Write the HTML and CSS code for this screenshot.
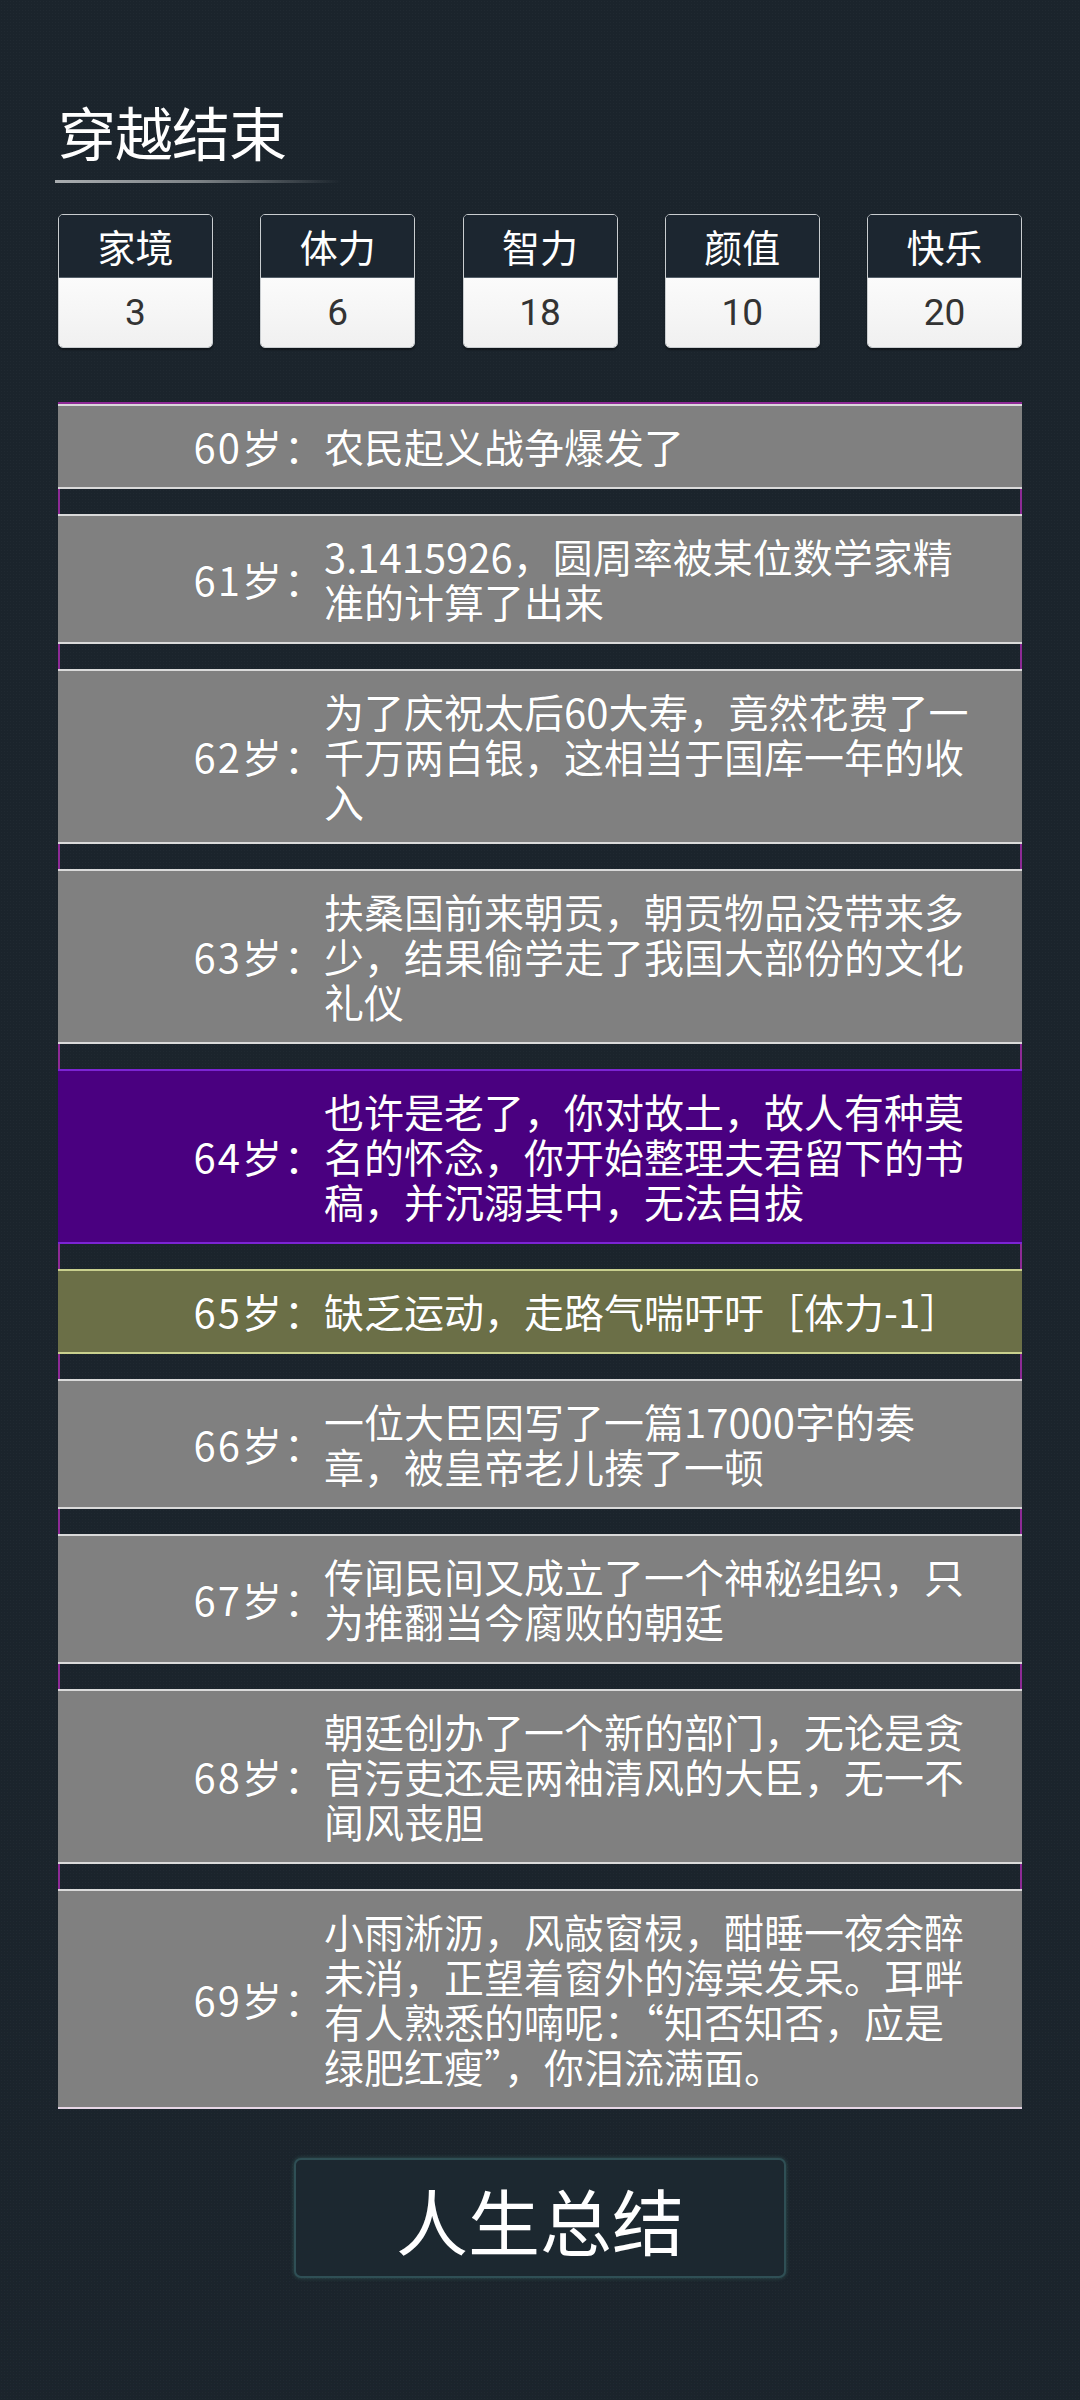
FILE: index.html
```html
<!DOCTYPE html>
<html lang="zh-CN">
<head>
    <meta charset="UTF-8">
    <meta name="viewport" content="width=device-width, initial-scale=1.0">
    <title>穿越结束</title>
    <link rel="stylesheet" href="styles.css">
</head>
<body>
    <div class="page">
        <h1 class="title">穿越结束</h1>
        <div class="title-line"></div>

        <div class="stats">
            <div class="stat"><div class="stat-name">家境</div><div class="stat-value">3</div></div>
            <div class="stat"><div class="stat-name">体力</div><div class="stat-value">6</div></div>
            <div class="stat"><div class="stat-name">智力</div><div class="stat-value">18</div></div>
            <div class="stat"><div class="stat-name">颜值</div><div class="stat-value">10</div></div>
            <div class="stat"><div class="stat-name">快乐</div><div class="stat-value">20</div></div>
        </div>

        <ul class="events">
            <li class="event"><span class="age">60岁：</span><span class="desc">农民起义战争爆发了</span></li>
            <li class="event"><span class="age">61岁：</span><span class="desc">3.1415926，圆周率被某位数学家精准的计算了出来</span></li>
            <li class="event"><span class="age">62岁：</span><span class="desc">为了庆祝太后60大寿，竟然花费了一千万两白银，这相当于国库一年的收入</span></li>
            <li class="event"><span class="age">63岁：</span><span class="desc">扶桑国前来朝贡，朝贡物品没带来多少，结果偷学走了我国大部份的文化礼仪</span></li>
            <li class="event event-rare"><span class="age">64岁：</span><span class="desc">也许是老了，你对故土，故人有种莫名的怀念，你开始整理夫君留下的书稿，并沉溺其中，无法自拔</span></li>
            <li class="event event-effect"><span class="age">65岁：</span><span class="desc">缺乏运动，走路气喘吁吁［体力-1］</span></li>
            <li class="event"><span class="age">66岁：</span><span class="desc">一位大臣因写了一篇17000字的奏章，被皇帝老儿揍了一顿</span></li>
            <li class="event"><span class="age">67岁：</span><span class="desc">传闻民间又成立了一个神秘组织，只为推翻当今腐败的朝廷</span></li>
            <li class="event"><span class="age">68岁：</span><span class="desc">朝廷创办了一个新的部门，无论是贪官污吏还是两袖清风的大臣，无一不闻风丧胆</span></li>
            <li class="event"><span class="age">69岁：</span><span class="desc">小雨淅沥，风敲窗棂，酣睡一夜余醉未消，正望着窗外的海棠发呆。耳畔有人熟悉的喃呢：“知否知否，应是绿肥红瘦”，你泪流满面。</span></li>
        </ul>

        <div class="actions">
            <button class="summary-btn">人生总结</button>
        </div>
    </div>
</body>
</html>
```

FILE: styles.css
```css
/* ==================================== */
/* 基本样式                              */
/* ==================================== */
html {
    background-color: #1b242c;
}

body {
    margin: 0;
    min-height: 2400px;
    font-family: "Noto Sans CJK SC", "Noto Sans", sans-serif;
    color: #fff;
    background-color: #1b242c;
    background-image: radial-gradient(rgba(255,255,255,0.025) 1px, transparent 1px);
    background-size: 3px 3px;
}

.page {
    padding: 96px 58px 0;
}

/* 标题 */
.title {
    margin: 0;
    font-size: 58px;
    line-height: 70px;
    font-weight: 400;
    letter-spacing: -1px;
}

.title-line {
    width: 286px;
    height: 3px;
    margin: 14px 0 0 -3px;
    background: linear-gradient(90deg, #a9adb0 0%, #7d8387 50%, rgba(60,66,70,0) 100%);
}

/* ==================================== */
/* 属性                                  */
/* ==================================== */
.stats {
    display: flex;
    justify-content: space-between;
    margin-top: 31px;
}

.stat {
    width: 155px;
    height: 134px;
    box-sizing: border-box;
    border: 1px solid #c9cdd0;
    border-radius: 5px;
    overflow: hidden;
    display: flex;
    flex-direction: column;
    box-shadow: 0 2px 2px rgba(0,0,0,0.4);
}

.stat-name {
    height: 62px;
    background-color: #1c2630;
    font-size: 38px;
    line-height: 62px;
    text-align: center;
    border-bottom: 1px solid #55606a;
}

.stat-value {
    flex: 1;
    background: linear-gradient(#fbfbfb, #f0f0f0);
    color: #333;
    font-family: Roboto, "Noto Sans CJK SC", sans-serif;
    font-size: 37px;
    line-height: 70px;
    text-align: center;
}

/* ==================================== */
/* 经历列表                              */
/* ==================================== */
.events {
    list-style: none;
    margin: 54px 0 0;
    padding: 0;
    border: 2px solid #8e2a96;
    border-bottom: none;
}

.event {
    display: grid;
    grid-template-columns: 266px 650px;
    align-items: center;
    margin: 25px -2px 0;
    padding: 18px 0;
    background-color: #808080;
    border-top: 2px solid #dadada;
    border-bottom: 2px solid #dadada;
    font-size: 40px;
    line-height: 45px;
    text-shadow: 0 0 1px rgba(0,0,0,0.25);
}

.event:first-child {
    margin-top: 0;
}

.event:last-child {
    border-bottom-color: #e6d6e6;
}

.age {
    text-align: right;
    white-space: nowrap;
    letter-spacing: 2px;
    margin-right: -2px;
}

.desc {
    word-break: break-all;
}

/* 稀有事件 */
.event-rare {
    background-color: #4a0080;
    border-top-color: #7c24d4;
    border-bottom-color: #7c24d4;
}

/* 属性变化事件 */
.event-effect {
    background-color: #6b6f47;
    border-top-color: #c9d08e;
    border-bottom-color: #c9d08e;
}

/* ==================================== */
/* 人生总结按钮                          */
/* ==================================== */
.actions {
    display: flex;
    justify-content: center;
    margin-top: 49px;
}

.summary-btn {
    width: 492px;
    height: 120px;
    background-color: #1c2830;
    border: 2px solid #2f4f55;
    border-radius: 7px;
    box-shadow: 0 0 4px rgba(70,140,130,0.45);
    color: #fff;
    font-family: "Noto Sans CJK SC", sans-serif;
    font-size: 72px;
    letter-spacing: 0;
    cursor: pointer;
}
```
